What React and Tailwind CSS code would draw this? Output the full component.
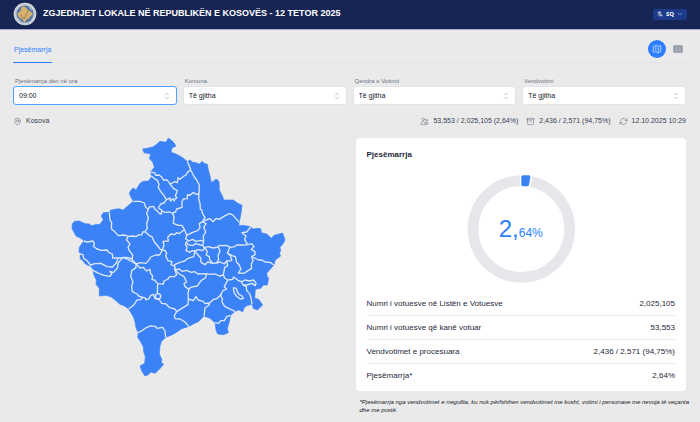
import React from "react";
import { HiOutlineMap, HiOutlineMapPin, HiOutlineUsers, HiOutlineArchiveBox, HiOutlineArrowPath, HiOutlineLanguage, HiOutlineChevronDown, HiOutlineChevronUpDown } from "react-icons/hi2";

const filters = [
  { id: "ora", label: "Pjesëmarrja deri në ora", value: "09:00", active: true },
  { id: "komuna", label: "Komuna", value: "Të gjitha" },
  { id: "qendra", label: "Qendra e Votimit", value: "Të gjitha" },
  { id: "vendvotimi", label: "Vendvotimi", value: "Të gjitha" },
];

const rows = [
  ["Numri i votuesve në Listën e Votuesve", "2,025,105"],
  ["Numri i votuesve që kanë votuar", "53,553"],
  ["Vendvotimet e procesuara", "2,436 / 2,571 (94,75%)"],
  ["Pjesëmarrja*", "2,64%"],
];

const outline =
  "325,24 333,30 340,36 348,48 336,54 333,67 346,71 360,78 372,86 382,95 390,90 398,97 408,98 418,102 427,94 432,100 442,103 445,120 450,138 454,158 462,152 468,147 477,154 478,180 486,196 492,210 520,210 532,219 546,226 543,250 538,275 536,287 548,286 562,288 572,291 580,297 590,295 602,296 604,308 620,312 634,325 642,316 654,313 668,309 675,330 668,343 660,352 662,362 658,370 662,378 646,390 642,405 632,416 620,430 622,440 626,445 622,465 610,465 602,475 586,478 584,505 596,508 608,525 592,540 580,535 576,523 560,527 552,535 548,546 538,540 525,544 512,556 508,575 502,595 505,608 490,614 473,612 468,600 465,578 450,565 432,558 415,575 400,582 385,590 365,596 345,610 330,617 317,622 304,635 300,648 298,672 306,690 303,697 311,703 298,718 285,730 272,726 264,735 254,737 245,722 240,708 254,700 256,680 251,665 250,650 241,634 233,622 235,608 228,594 225,575 220,560 206,537 192,527 180,523 166,511 155,502 140,496 118,498 118,475 108,463 109,450 102,436 98,418 88,408 76,402 70,394 60,385 62,372 57,365 58,352 64,343 72,333 68,328 48,318 36,295 37,281 44,274 58,273 75,281 88,282 95,287 110,283 118,284 130,270 124,258 130,248 150,247 152,240 175,236 190,240 203,228 220,214 213,202 208,190 213,180 220,174 228,180 240,160 250,154 265,153 275,140 272,126 283,112 278,96 268,86 272,72 252,68 248,57 265,54 280,50 290,43 300,34 318,37";

const borders = [
  "272,127 284,128 287,136 297,135 306,142 310,150 322,150 330,162 345,155 352,158 354,143 360,148 372,138 378,135 382,127 392,120 388,108 382,95",
  "274,138 284,146 292,151 297,163 295,173 303,186 312,196 317,206 324,208 330,203 331,213 339,206 342,213 346,206 351,204 346,198 352,182 340,175 330,162",
  "392,120 403,141 410,150 418,165 417,188 411,194 400,188 388,196 382,194 382,206 370,207 366,215 366,232 350,237 347,245 338,250 342,260 340,280 355,286 366,286 374,300 380,316 398,307 413,302 420,293 418,281 428,275 435,262 427,250 426,240 421,238 420,220 416,208 417,188",
  "320,208 312,219 302,222 295,234 305,240 304,252 298,250 290,241 284,237 281,229 268,231 265,238",
  "304,243 316,247 329,246 338,250",
  "220,214 240,214 253,219 257,232 265,238 260,250 265,264 260,282 262,295 255,305 248,306 246,314 235,315 228,320 218,318 205,319 192,315 175,317 161,302 154,296 155,278 150,270 148,248",
  "255,305 270,318 276,320 283,336 291,345 301,358 307,360 312,345 309,334 325,333 323,322 333,312 344,314 350,308 357,311 372,300",
  "205,319 199,329 210,342 204,352 208,362 218,375 216,388 228,402",
  "72,333 81,336 99,333 103,340 100,349 111,357 124,361 141,360 146,367 157,372 158,384 175,384 200,382 218,387",
  "60,372 69,374 71,385 82,393 91,405 105,401 123,400 141,410 157,411 169,399 174,384",
  "88,408 98,421 118,431 132,436 150,439 155,432 150,424 160,428 173,413 174,400 188,382 204,388 228,402",
  "228,402 228,413 215,422 212,439 219,455 215,470 217,485 231,492 236,498 248,502 242,509 231,510 222,524 206,537",
  "248,502 256,504 258,510 268,505 272,496 280,493 285,506 298,509 305,520 318,522 329,533 345,537 350,545 343,557 345,566 360,567 375,576 387,590",
  "228,402 240,414 249,412 260,423 270,418 272,431 278,438 276,449 284,450 293,461 310,462 312,453 324,447 329,440 343,440 350,434 345,420",
  "228,402 241,398 258,400 266,391 272,381 287,375 299,375 307,360",
  "307,360 316,362 320,370 317,378 324,392 336,395 333,404 343,408 345,420",
  "293,461 292,491",
  "235,608 249,600 255,595 270,588 285,589 291,595 308,592 315,603 317,622",
  "350,545 369,533 384,524 385,507 400,512 408,500 414,510 430,514 435,521 445,519 448,524 435,534 432,558",
  "385,507 384,489 387,478 375,470 372,460 380,456 372,440 358,432 345,420",
  "345,420 358,417 366,424 380,421 393,427 403,425 415,432 440,431 450,433 466,432 478,438 490,435 494,444 503,450",
  "440,431 436,444 423,452 412,468 391,472 387,478",
  "345,420 344,404 360,397 374,393 384,385 401,380 405,364 396,362 390,367 378,362 381,351 376,344 380,334",
  "405,364 414,375 422,383 423,397 435,404 443,396 458,400 469,399 481,396 493,402 500,393 503,407 494,412 490,435",
  "503,450 493,470 500,477 489,482 481,495 487,506 486,516 494,529 507,536 525,544",
  "485,493 470,506 459,509 450,518 445,519",
  "503,450 518,448 521,441 534,451 544,455 549,465 559,470 560,481 570,493 574,508 576,523",
  "544,455 555,450 568,453 581,450 588,460 586,467 575,460 561,465 549,465",
  "465,578 476,580 482,572 493,572 500,560 512,556",
  "428,275 438,270 450,266 459,275 469,265 478,268 490,260 508,251 517,254 528,266 538,277",
  "380,316 377,326 386,333 398,328 407,334 422,331 431,334 430,318 437,306 431,292 438,281 428,275",
  "431,334 428,346 432,353 445,350 459,354 474,351 477,347 501,346 510,352 502,369 512,378 515,392 500,393",
  "510,352 524,350 530,345 549,345 563,344 554,329 558,318 546,308 560,306 572,291",
  "563,344 575,341 582,350 574,359 585,365 585,374 575,380 579,392 574,402 575,415 560,425 550,430 535,429 543,417 537,404 530,397 526,380 516,377 502,369",
  "579,382 596,390 606,390 615,396 630,397 642,405",
  "380,334 382,343 398,347 407,341 422,345 428,346",
  "474,351 480,362 474,378 476,389 470,398",
  "402,363 417,359 426,362 436,354 442,366 438,375 448,380 449,390 458,399",
  "520,473 529,475 532,485 537,493 546,498 550,506 541,507 530,499 522,487 520,473",
];

function KosovoMap() {
  return (
    <svg viewBox="3 24 690 720" className="ml-12 w-[230px]" role="img" aria-label="Harta e Kosovës">
      <polygon points={outline} fill="#3b82f6" stroke="#3b82f6" strokeWidth="2" strokeLinejoin="round" />
      <g fill="none" stroke="#dfe8f5" strokeWidth="4" strokeLinejoin="round">
        {borders.map((points) => (
          <polyline key={points} points={points} />
        ))}
        <circle cx="294" cy="499" r="8" fill="#3b82f6" />
      </g>
    </svg>
  );
}

function Emblem() {
  return (
    <svg viewBox="0 0 72 72" className="size-6 shrink-0" aria-hidden="true">
      <circle cx="36" cy="36" r="34" fill="#d9dde0" />
      <circle cx="36" cy="36" r="30" fill="none" stroke="#a3b0bb" strokeWidth="3" strokeDasharray="3 2" />
      <circle cx="36" cy="36" r="26" fill="#5b7aa6" />
      <path d="M31 12 39 17 44 23 54 29 60 37 52 42 49 48 41 52 34 62 28 52 17 45 13 34 23 28 25 18Z" fill="#d9b36b" />
      <path d="M23 37 33 51 47 24" fill="none" stroke="#8f8058" strokeWidth="3" />
      <path d="M49 16 56 23M17 51l6 5" stroke="#d9dde0" strokeWidth="3" />
    </svg>
  );
}

function TableIcon() {
  return (
    <svg viewBox="0 0 30 24" className="w-[10px]" aria-hidden="true">
      <rect x="1" y="1" width="28" height="22" rx="3" fill="#8f96a3" />
      <path d="M9 4v16M21 4v16" stroke="#d4d7dc" strokeWidth="2" />
      <path d="M15 6v3M15 12v8" stroke="#c3c7cf" strokeWidth="2" />
    </svg>
  );
}

function Donut() {
  return (
    <div className="mx-auto grid size-[108px] place-items-center">
      <svg viewBox="0 0 324 324" className="col-start-1 row-start-1 size-[108px]" aria-hidden="true">
        <circle cx="163" cy="162" r="145" fill="none" stroke="#e5e7eb" strokeWidth="32" />
        <path d="M159 0H197L189 38H159Z" fill="#fff" />
        <path d="M168 1h17q6 0 5 6l-4 22q-1 5-6 5h-12q-5 0-5-5V6q0-5 5-5Z" fill="#3b82f6" />
      </svg>
      <p className="col-start-1 row-start-1 text-2xl leading-none text-blue-500">
        2,<span className="text-[12px]">64%</span>
      </p>
    </div>
  );
}

export default function App() {
  return (
    <div className="min-h-screen overflow-x-hidden bg-[#eaeaea] font-['Liberation_Sans',sans-serif] text-gray-800">
      <header className="flex h-[30px] items-center justify-between border-b border-[#aaa6d0] bg-[#172554] px-[13px] pb-px">
        <div className="flex items-center gap-[6px]">
          <Emblem />
          <h1 className="text-[9px] font-bold whitespace-nowrap text-white">ZGJEDHJET LOKALE NË REPUBLIKËN E KOSOVËS - 12 TETOR 2025</h1>
        </div>
        <button className="flex h-[11px] items-center gap-[3px] rounded-[3px] bg-[#1e3a8a] px-1 font-['Open_Sans',sans-serif] text-[6px] font-bold text-white">
          <HiOutlineLanguage className="size-[6px] stroke-2" />
          SQ
          <HiOutlineChevronDown className="size-[6px] stroke-2 text-blue-200" />
        </button>
      </header>

      <main className="pr-[14px] pl-[13px]">
        <div className="flex h-[33px] justify-between border-b border-[#e0e4e5]">
          <nav className="-mb-px flex">
            <a href="#pjesemarrja" className="flex items-center border-b border-blue-500 px-px pt-2 text-[7px] text-blue-500">Pjesëmarrja</a>
          </nav>
          <div className="flex items-center gap-1 pt-[6px]">
            <button aria-label="Harta" className="grid size-[18px] place-items-center rounded-full bg-blue-500 text-white">
              <HiOutlineMap className="size-[10px]" />
            </button>
            <button aria-label="Tabela" className="grid size-4 place-items-center">
              <TableIcon />
            </button>
          </div>
        </div>

        <div className="mt-[13px] grid grid-cols-4 gap-[6px]">
          {filters.map((f) => (
            <div key={f.id}>
              <label htmlFor={f.id} className="block px-[2px] text-[6px] leading-[10px] text-gray-500">{f.label}</label>
              <div className={`grid items-center rounded-[3px] border bg-white ${f.active ? "border-blue-400" : "border-[#e2e4e8]"}`}>
                <select id={f.id} className="col-start-1 row-start-1 h-[17px] w-full appearance-none bg-transparent px-[5px] pt-px text-[7px] text-gray-900 outline-none">
                  <option>{f.value}</option>
                </select>
                <HiOutlineChevronUpDown className="pointer-events-none col-start-1 row-start-1 mr-1 size-[10px] justify-self-end text-gray-400" />
              </div>
            </div>
          ))}
        </div>

        <div className="mt-[11px] flex h-[10px] items-center justify-between text-[7px] text-gray-700">
          <div className="flex items-center gap-1">
            <HiOutlineMapPin className="size-[9px] text-gray-500" />
            Kosova
          </div>
          <div className="flex items-center gap-2">
            <span className="flex items-center gap-1"><HiOutlineUsers className="size-[9px] text-gray-500" />53,553 / 2,025,105 (2,64%)</span>
            <span className="flex items-center gap-1"><HiOutlineArchiveBox className="size-[9px] text-gray-500" />2,436 / 2,571 (94,75%)</span>
            <span className="flex items-center gap-1"><HiOutlineArrowPath className="size-[9px] text-gray-500" />12.10.2025 10:29</span>
          </div>
        </div>

        <div className="mt-3 grid grid-cols-2 gap-3">
          <KosovoMap />
          <div>
            <section className="rounded bg-white px-[11px] pt-3 pb-[3px]">
              <h2 className="text-[8px] leading-[10px] font-bold text-gray-800">Pjesëmarrja</h2>
              <div className="pt-[15px] pb-[9px]">
                <Donut />
              </div>
              <dl className="divide-y divide-gray-200 text-[8px]">
                {rows.map(([label, value]) => (
                  <div key={label} className="flex h-6 items-center justify-between">
                    <dt>{label}</dt>
                    <dd>{value}</dd>
                  </div>
                ))}
              </dl>
            </section>
            <p className="-mr-2 pt-[7px] pl-1 text-[6px] leading-[8px] text-gray-900 italic">
              *Pjesëmarrja nga vendvotimet e rregullta, ku nuk përfshihen vendvotimet me kusht, votimi i personave me nevoja të veçanta dhe me postë.
            </p>
          </div>
        </div>
      </main>
    </div>
  );
}
